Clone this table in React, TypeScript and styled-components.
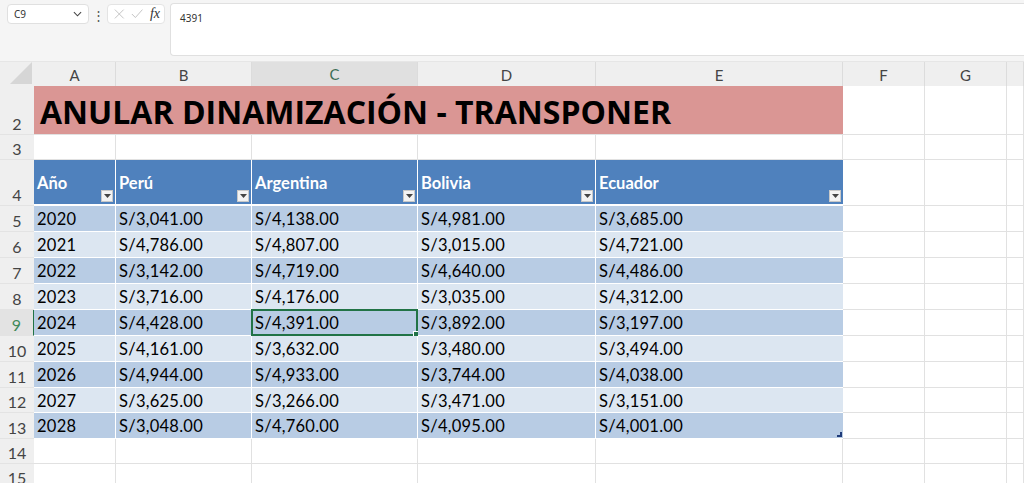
import React from "react";
import styled, { createGlobalStyle, css } from "styled-components";

const GlobalStyle = createGlobalStyle`
  html, body {
    margin: 0;
    padding: 0;
    background: #ffffff;
    overflow: hidden;
  }
  * {
    box-sizing: border-box;
  }
`;

const COLS = "34px 82px 136px 166px 178px 247px 82px 82px 1fr";
const letters = ["A", "B", "C", "D", "E", "F", "G", ""];

const headers = ["Año", "Perú", "Argentina", "Bolivia", "Ecuador"];
const data: string[][] = [
  ["2020", "S/3,041.00", "S/4,138.00", "S/4,981.00", "S/3,685.00"],
  ["2021", "S/4,786.00", "S/4,807.00", "S/3,015.00", "S/4,721.00"],
  ["2022", "S/3,142.00", "S/4,719.00", "S/4,640.00", "S/4,486.00"],
  ["2023", "S/3,716.00", "S/4,176.00", "S/3,035.00", "S/4,312.00"],
  ["2024", "S/4,428.00", "S/4,391.00", "S/3,892.00", "S/3,197.00"],
  ["2025", "S/4,161.00", "S/3,632.00", "S/3,480.00", "S/3,494.00"],
  ["2026", "S/4,944.00", "S/4,933.00", "S/3,744.00", "S/4,038.00"],
  ["2027", "S/3,625.00", "S/3,266.00", "S/3,471.00", "S/3,151.00"],
  ["2028", "S/3,048.00", "S/4,760.00", "S/4,095.00", "S/4,001.00"],
];
const dataHeights = [26, 26, 26, 26, 26, 26, 26, 25, 26];

export default function App() {
  return (
    <>
      <GlobalStyle />
      <Page>
        <FormulaBar>
          <NameBox>
            <span>C9</span>
            <Chevron viewBox="0 0 10 6">
              <path d="M1 1 L5 5 L9 1" fill="none" stroke="#444" strokeWidth="1.2" />
            </Chevron>
          </NameBox>
          <Dots>⋮</Dots>
          <FxBox>
            <svg width="12" height="12" viewBox="0 0 12 12">
              <path d="M1 1 L11 11 M11 1 L1 11" stroke="#bdbdbd" strokeWidth="1" />
            </svg>
            <svg width="14" height="12" viewBox="0 0 14 12">
              <path d="M1 6 L5 10 L13 1" fill="none" stroke="#bdbdbd" strokeWidth="1" />
            </svg>
            <FxLabel>fx</FxLabel>
          </FxBox>
          <FormulaInput>4391</FormulaInput>
        </FormulaBar>

        <Sheet>
          <HeaderRow>
            <Corner>
              <svg width="22" height="22" viewBox="0 0 22 22">
                <path d="M22 0 L22 22 L0 22 Z" fill="#d6d6d6" />
              </svg>
            </Corner>
            {letters.map((l, i) => (
              <ColHead key={i} $active={l === "C"}>
                {l}
              </ColHead>
            ))}
          </HeaderRow>

          <Row $h={49}>
            <RowNum>2</RowNum>
            <TitleCell>ANULAR DINAMIZACIÓN - TRANSPONER</TitleCell>
            <Cell />
            <Cell />
            <Cell />
          </Row>

          <Row $h={25}>
            <RowNum>3</RowNum>
            {letters.map((_, i) => (
              <Cell key={i} />
            ))}
          </Row>

          <Row $h={46}>
            <RowNum>4</RowNum>
            {headers.map((h) => (
              <HeadCell key={h}>
                {h}
                <FilterBtn>
                  <svg width="7" height="4" viewBox="0 0 7 4">
                    <path d="M0 0 L7 0 L3.5 4 Z" fill="#444" />
                  </svg>
                </FilterBtn>
              </HeadCell>
            ))}
            <Cell />
            <Cell />
            <Cell />
          </Row>

          {data.map((r, ri) => (
            <Row key={ri} $h={dataHeights[ri]}>
              <RowNum $active={ri === 4}>{ri + 5}</RowNum>
              {r.map((v, ci) => (
                <DataCell key={ci} $dark={ri % 2 === 0}>
                  {v}
                  {ri === 4 && ci === 2 && <Selection />}
                  {ri === 8 && ci === 4 && <ResizeMark />}
                </DataCell>
              ))}
              <Cell />
              <Cell />
              <Cell />
            </Row>
          ))}

          <Row $h={25}>
            <RowNum>14</RowNum>
            {letters.map((_, i) => (
              <Cell key={i} />
            ))}
          </Row>
          <Row $h={25}>
            <RowNum>15</RowNum>
            {letters.map((_, i) => (
              <Cell key={i} />
            ))}
          </Row>
        </Sheet>
      </Page>
    </>
  );
}

const Page = styled.div`
  width: 1024px;
  height: 483px;
  overflow: hidden;
  background: #ffffff;
  font-family: Lato, "Open Sans", sans-serif;
`;

const FormulaBar = styled.div`
  height: 62px;
  background: #f5f5f5;
  border-bottom: 1px solid #e6e6e6;
  display: flex;
  align-items: flex-start;
  padding: 3px 0 0 7px;
`;

const NameBox = styled.div`
  width: 82px;
  height: 20px;
  margin-top: 1px;
  background: #fff;
  border: 1px solid #e0e0e0;
  border-radius: 4px;
  display: flex;
  align-items: center;
  justify-content: space-between;
  padding: 0 6px 0 6px;
  font-family: "Noto Sans", sans-serif;
  font-size: 10px;
  color: #333;
`;

const Chevron = styled.svg`
  width: 9px;
  height: 6px;
`;

const Dots = styled.div`
  width: 18px;
  text-align: center;
  font-size: 13px;
  line-height: 24px;
  color: #555;
`;

const FxBox = styled.div`
  width: 58px;
  height: 20px;
  margin-top: 1px;
  background: #fff;
  border: 1px solid #e4e4e4;
  border-radius: 4px;
  display: flex;
  align-items: center;
  gap: 6px;
  padding: 0 4px 0 6px;
`;

const FxLabel = styled.span`
  font-family: "Liberation Serif", serif;
  font-style: italic;
  font-size: 14px;
  color: #333;
  margin-left: 1px;
`;

const FormulaInput = styled.div`
  flex: 1;
  margin-left: 5px;
  height: 53px;
  background: #fff;
  border: 1px solid #e0e0e0;
  border-right: none;
  border-radius: 4px 0 0 4px;
  padding: 7px 9px;
  font-family: "Noto Sans", sans-serif;
  font-size: 10px;
  color: #333;
`;

const Sheet = styled.div`
  display: flex;
  flex-direction: column;
`;

const HeaderRow = styled.div`
  display: grid;
  grid-template-columns: ${COLS};
  height: 24px;
  background: #efefef;
`;

const Corner = styled.div`
  display: flex;
  align-items: flex-end;
  justify-content: flex-end;
  padding: 0 2px 3px 0;
`;

const ColHead = styled.div<{ $active?: boolean }>`
  display: flex;
  align-items: center;
  justify-content: center;
  font-size: 15px;
  color: #444;
  border-right: 1px solid #dcdcdc;
  ${(p) =>
    p.$active &&
    css`
      background: #e0e0e0;
      color: #3e6e55;
      border-bottom: 1px solid #217346;
    `}
`;

const Row = styled.div<{ $h: number }>`
  display: grid;
  grid-template-columns: ${COLS};
  height: ${(p) => p.$h}px;
`;

const RowNum = styled.div<{ $active?: boolean }>`
  background: #efefef;
  display: flex;
  align-items: flex-end;
  justify-content: center;
  padding-bottom: 1px;
  font-size: 16px;
  color: ${(p) => (p.$active ? "#3e8a5a" : "#444")};
  border-bottom: 1px solid #e3e3e3;
  ${(p) =>
    p.$active &&
    css`
      background: #e3e3e3;
      border-right: 1px solid #217346;
    `}
`;

const Cell = styled.div`
  border-right: 1px solid #e1e1e1;
  border-bottom: 1px solid #e1e1e1;
`;

const TitleCell = styled.div`
  grid-column: span 5;
  background: #da9694;
  border-bottom: 1px solid #e1e1e1;
  display: flex;
  align-items: center;
  padding: 2px 0 0 6px;
  font-family: "Open Sans", sans-serif;
  font-weight: 700;
  font-size: 32px;
  color: #000;
`;

const HeadCell = styled.div`
  position: relative;
  background: #4f81bd;
  border-right: 1px solid #ffffff;
  border-bottom: 2px solid #ffffff;
  display: flex;
  align-items: center;
  padding: 2px 3px 0;
  font-weight: 700;
  font-size: 16.5px;
  color: #ffffff;
  &:nth-child(6) {
    border-right: none;
  }
`;

const FilterBtn = styled.div`
  position: absolute;
  right: 2px;
  bottom: 2px;
  width: 12px;
  height: 12px;
  background: #f3f3f3;
  border: 1px solid #c8c8c8;
  display: flex;
  align-items: center;
  justify-content: center;
`;

const DataCell = styled.div<{ $dark: boolean }>`
  position: relative;
  background: ${(p) => (p.$dark ? "#b8cce4" : "#dce6f1")};
  border-right: 1px solid #ffffff;
  border-bottom: 1px solid #ffffff;
  display: flex;
  align-items: center;
  padding: 1px 3px 0;
  font-size: 16.5px;
  letter-spacing: 0.25px;
  color: #000;
  &:nth-child(6) {
    border-right: none;
  }
`;

const Selection = styled.div`
  position: absolute;
  left: -1px;
  top: -1px;
  right: -1px;
  bottom: -1px;
  border: 2px solid #217346;
  &::after {
    content: "";
    position: absolute;
    right: -4px;
    bottom: -4px;
    width: 5px;
    height: 5px;
    background: #217346;
    border: 1px solid #fff;
  }
`;

const ResizeMark = styled.div`
  position: absolute;
  right: 1px;
  bottom: 1px;
  width: 5px;
  height: 5px;
  border-right: 2px solid #1f3b7a;
  border-bottom: 2px solid #1f3b7a;
`;
